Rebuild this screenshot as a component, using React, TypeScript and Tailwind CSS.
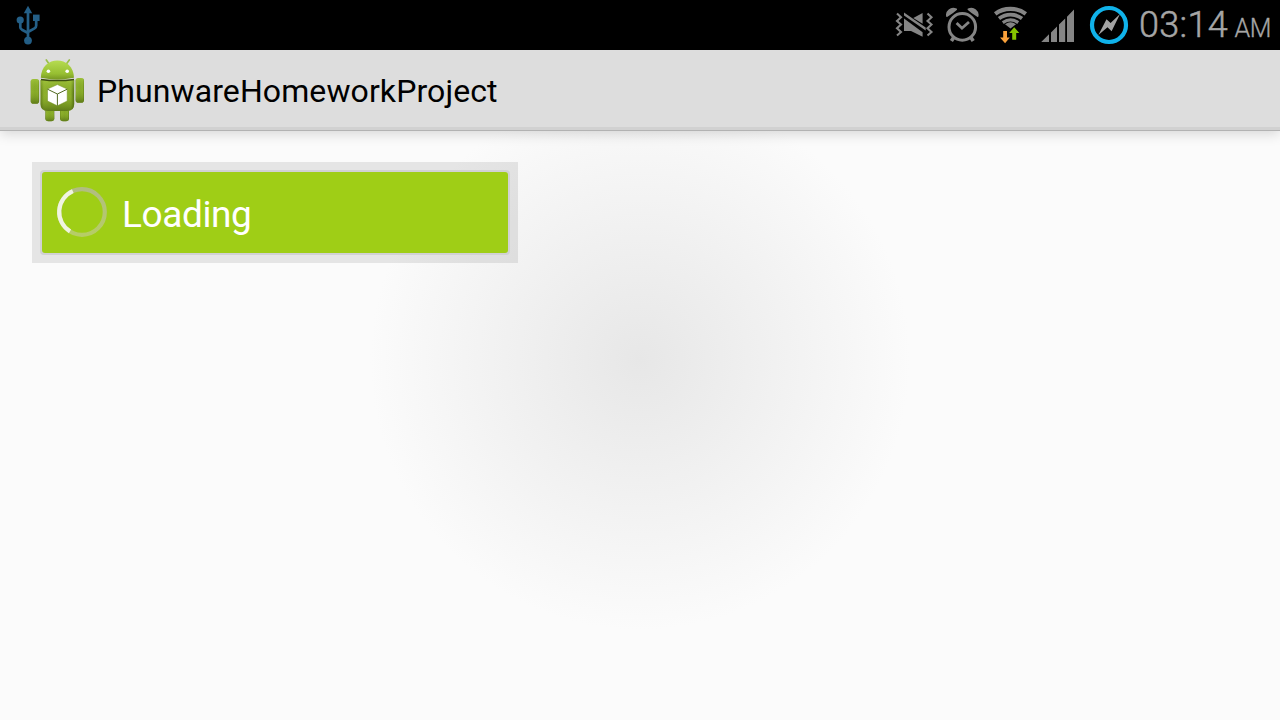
function UsbIcon() {
  return (
    <svg width="28" height="42" viewBox="0 0 28 42" className="mt-[5px] ml-[14px]" fill="none" stroke="#245f87" strokeWidth="2.7">
      <path d="M14 6V36M6.3 15V22.3Q6.3 24 8 24.8L14 28M22.2 14V20.5Q22.2 22.5 20.5 23.4L14 27" />
      <path d="M14 0.8L18.2 8.2H9.8Z" fill="#245f87" stroke="none" />
      <circle cx="6.2" cy="15" r="3.6" fill="#245f87" stroke="none" />
      <path d="M19 9.6H25.6V16H19Z" fill="#245f87" stroke="none" />
      <circle cx="14" cy="35.6" r="3.9" fill="#245f87" stroke="none" />
    </svg>
  );
}

function VibrateIcon() {
  return (
    <svg width="40" height="28" viewBox="894 11 40 28" className="shrink-0">
      <path d="M897 13.5l4 3.7-4 3.7 4 3.7-4 3.7 4 3.7-4 3.5M927.5 13.5l4 3.7-4 3.7 4 3.7-4 3.7 4 3.7-4 3.5" fill="none" stroke="#858585" strokeWidth="2.1" />
      <path d="M904 18.6V31H911L922.6 36.8V32.2Z M913.3 18L922.6 13V23.8Z M904 12.6L925.7 27.6V30.4L904 15.6Z" fill="#858585" />
    </svg>
  );
}

function AlarmIcon() {
  return (
    <svg width="34" height="36" viewBox="945 7 34 36" className="ml-[11px] shrink-0" fill="none" stroke="#858585">
      <circle cx="962.3" cy="26.9" r="13.3" strokeWidth="3" />
      <path d="M956.6 22.9L962 28.2L969 22" strokeWidth="2.8" />
      <path d="M954 37L951.4 41M970.6 37L973.2 41" strokeWidth="3.6" />
      <path d="M947 16.2C945.8 11.5 951 6.8 956.2 9.3C953.4 11.8 950.4 14 947 16.2ZM977.6 16.2C978.8 11.5 973.6 6.8 968.4 9.3C971.2 11.8 974.2 14 977.6 16.2Z" fill="#858585" strokeWidth="1.6" strokeLinejoin="round" />
    </svg>
  );
}

function WifiIcon() {
  return (
    <svg width="36" height="40" viewBox="992 5 36 40" className="ml-[13px] shrink-0" fill="none">
      <g stroke="#858585" strokeWidth="4.1">
        <path d="M995.2 13.8C1004 7.2 1017 7.2 1025.8 13.8" />
        <path d="M999 18.5C1006 13.3 1015 13.3 1022 18.5" strokeWidth="3.8" />
        <path d="M1002.8 22.6C1007.7 19.1 1013.3 19.1 1018.2 22.6" strokeWidth="3.2" />
      </g>
      <path d="M1005 24.2Q1010.5 20.4 1016 24.2L1010.5 28.6Z" fill="#858585" />
      <path d="M1003.2 31H1007V37.6H1009.8L1005.1 43.2L1000 37.6H1003.2Z" fill="#f9a13b" />
      <path d="M1014.2 27.3L1019.3 33H1016.2V39.8H1012.2V33H1009.2Z" fill="#86c400" />
    </svg>
  );
}

function SignalIcon() {
  return (
    <svg width="34" height="34" viewBox="1041 9 34 34" className="ml-[13px] mt-[2px] shrink-0">
      <path d="M1041.2 42L1049 34.3V42ZM1051 32.5L1057 26.6V42H1051ZM1059 24.6L1065.2 18.5V42H1059ZM1067 16.7L1074 9.6V42H1067Z" fill="#858585" />
    </svg>
  );
}

function MessengerIcon() {
  return (
    <svg width="40" height="40" viewBox="1089 5 40 40" className="ml-[14px] shrink-0">
      <circle cx="1109" cy="25" r="17" fill="none" stroke="#10b2ea" strokeWidth="4.2" />
      <path d="M1098.4 35L1106.5 19.2L1110.6 23.1L1120 14L1111.6 31.2L1107.5 27.2Z" fill="#a3a3a3" />
    </svg>
  );
}

function AndroidIcon() {
  return (
    <svg width="56" height="66" viewBox="29 57 56 66" className="shrink-0">
      <defs>
        <linearGradient id="body" x1="0" x2="1">
          <stop offset="0" stopColor="#648018" />
          <stop offset=".1" stopColor="#8eb02d" />
          <stop offset=".5" stopColor="#86a928" />
          <stop offset=".9" stopColor="#8bae2b" />
          <stop offset="1" stopColor="#526d12" />
        </linearGradient>
        <linearGradient id="head" x1="0" y1="0" x2="0" y2="1">
          <stop offset="0" stopColor="#b6dc52" />
          <stop offset=".7" stopColor="#97bf32" />
          <stop offset="1" stopColor="#789923" />
        </linearGradient>
        <linearGradient id="shade" x1="0" y1="0" x2="0" y2="1">
          <stop offset="0" stopColor="#b7dc4f" stopOpacity=".45" />
          <stop offset=".5" stopColor="#789b20" stopOpacity="0" />
          <stop offset="1" stopColor="#42590d" stopOpacity=".6" />
        </linearGradient>
      </defs>
      <path d="M46.3 60L49.5 64.6M69.3 60L66 64.6" stroke="#9bbf4a" strokeWidth="1.7" strokeLinecap="round" />
      <rect x="45.3" y="105" width="9" height="16.3" rx="3" fill="url(#body)" />
      <rect x="60" y="105" width="9" height="16.3" rx="3" fill="url(#body)" />
      <rect x="45.3" y="105" width="9" height="16.3" rx="3" fill="url(#shade)" />
      <rect x="60" y="105" width="9" height="16.3" rx="3" fill="url(#shade)" />
      <rect x="30.7" y="79" width="8.4" height="24.7" rx="2.8" fill="url(#body)" />
      <rect x="75.6" y="78" width="8.4" height="24.7" rx="2.8" fill="url(#body)" />
      <rect x="30.7" y="79" width="8.4" height="24.7" rx="2.8" fill="url(#shade)" />
      <rect x="75.6" y="78" width="8.4" height="24.7" rx="2.8" fill="url(#shade)" />
      <path d="M40.5 80Q57.5 79 74.2 80V104Q74.2 111 67 111H47.8Q40.5 111 40.5 104Z" fill="url(#body)" />
      <path d="M40.5 80Q57.5 79 74.2 80V104Q74.2 111 67 111H47.8Q40.5 111 40.5 104Z" fill="url(#shade)" />
      <path d="M41 79.4Q57.5 81.8 74 79.4" fill="none" stroke="#3c4e10" strokeWidth="1.5" />
      <path d="M40.8 77.8C41.3 54.6 73.4 54.6 74 77.8Q57.4 80.8 40.8 77.8Z" fill="url(#head)" />
      <circle cx="48.4" cy="71.3" r="1.8" fill="#fff" />
      <circle cx="67.2" cy="71.3" r="1.8" fill="#fff" />
      <path d="M57.4 84.6L67.2 89V101L57.4 105.8L47.5 101V89Z" fill="#fff" stroke="#718d22" strokeWidth=".5" />
      <path d="M47.5 89.2L57.4 94L67.2 89.2M57.4 94V105.8" fill="none" stroke="#536b22" strokeWidth="1" />
    </svg>
  );
}

function Spinner() {
  return (
    <svg width="52" height="52" viewBox="0 0 52 52" className="-mt-[2px] shrink-0" fill="none">
      <defs>
        <linearGradient id="track" x1="0" y1="0" x2="0" y2="1">
          <stop offset="0" stopColor="#b1bd82" />
          <stop offset="1" stopColor="#b6cd66" />
        </linearGradient>
      </defs>
      <circle cx="26" cy="26" r="22.8" stroke="url(#track)" strokeWidth="4.2" />
      <path d="M16.8 5.1A22.8 22.8 0 0 0 14 45.4" stroke="#f0f4e0" strokeWidth="4.2" />
    </svg>
  );
}

export default function App() {
  return (
    <div className="flex h-[720px] w-[1280px] flex-col overflow-hidden bg-[#fbfbfb] bg-[radial-gradient(circle_at_640px_360px,#e7e7e7_0px,#fbfbfb_270px)] font-['Roboto',sans-serif]">
      <header className="flex h-[50px] shrink-0 items-start justify-between bg-black">
        <UsbIcon />
        <div className="flex h-[50px] items-center pr-[9px]">
          <VibrateIcon />
          <AlarmIcon />
          <WifiIcon />
          <SignalIcon />
          <MessengerIcon />
          <div className="ml-[9px] flex w-[133px] items-baseline justify-between whitespace-nowrap text-[#a6a6a6]">
            <span className="pl-[1px] text-[36px] leading-[50px] font-light tracking-[0.3px] [-webkit-text-stroke:0.5px_#a6a6a6]">03:14</span>
            <span className="text-[25px] font-light tracking-[-0.4px] [-webkit-text-stroke:0.3px_#a6a6a6]">AM</span>
          </div>
        </div>
      </header>
      <div className="flex h-[81px] shrink-0 items-center border-b border-[#b2b2b2] bg-[#dddddd] pl-[29px] shadow-[inset_0_-3px_0_#d1d1d1,0_3px_12px_rgba(0,0,0,0.15)]">
        <AndroidIcon />
        <h1 className="ml-[12px] pt-[2px] text-[32px] leading-[40px] font-normal tracking-[0.1px] text-black">PhunwareHomeworkProject</h1>
      </div>
      <main className="pt-[31px] pl-[32px]">
        <div className="h-[101px] w-[486px] bg-black/[0.085] p-[8px]">
          <div className="h-[85px] rounded-[4px] bg-[#d1d1d3] p-[2px]">
            <div className="flex h-[81px] items-center rounded-[3px] bg-[#9fce16] pl-[14px]">
              <Spinner />
              <span className="ml-[14px] pt-[4px] text-[37px] leading-[44px] tracking-[-0.4px] text-white">Loading</span>
            </div>
          </div>
        </div>
      </main>
    </div>
  );
}
